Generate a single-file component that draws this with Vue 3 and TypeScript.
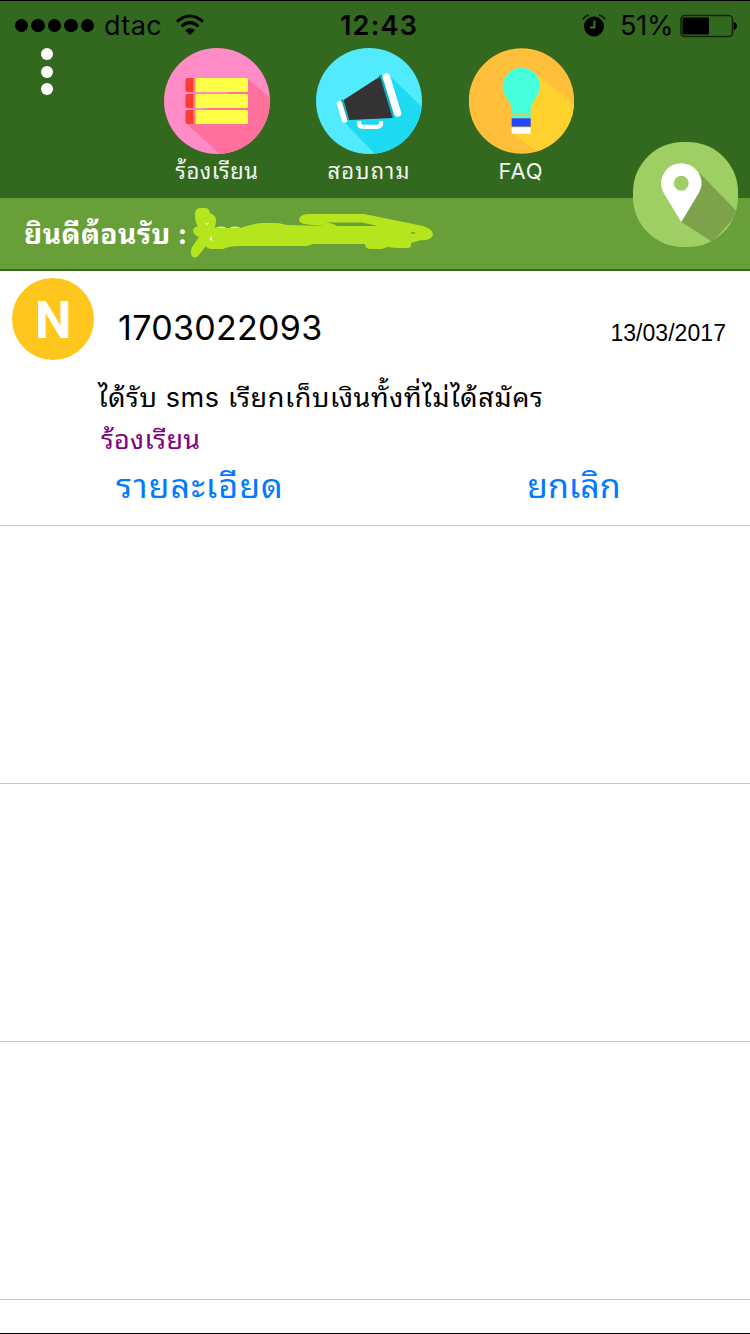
<script setup lang="ts">
interface Row {
  id: string
  date: string
  subject: string
  kind: string
}

const rows: Row[] = [
  {
    id: '1703022093',
    date: '13/03/2017',
    subject: 'ได้รับ sms เรียกเก็บเงินทั้งที่ไม่ได้สมัคร',
    kind: 'ร้องเรียน',
  },
]
const emptyRows = 3
</script>

<template>
  <div class="screen">
    <header class="top">
      <div class="status">
        <div class="status-left">
          <span class="signal"><i v-for="n in 5" :key="n" class="dot"></i></span>
          <span class="carrier">dtac</span>
          <svg class="wifi" width="30" height="22" viewBox="0 0 30 22">
            <g fill="none" stroke="#000" stroke-width="3.1">
              <path d="M2 7.6Q15 -3.6 28 7.6" />
              <path d="M6.6 12.3Q15 4.8 23.4 12.3" />
            </g>
            <path d="M10.2 16.2Q15 12.4 19.8 16.2L15 21Z" />
          </svg>
        </div>
        <span class="clock">12:43</span>
        <div class="status-right">
          <svg class="alarm" width="24" height="24" viewBox="0 0 24 24">
            <circle cx="12" cy="12.500" r="10" />
            <path d="M1 5.500Q2.500 2 7 1.100M23 5.500Q21.500 2 17 1.100" fill="none" stroke="#0f2008" stroke-width="1.800" />
            <path d="M12.500 6.500V13.500H8" fill="none" stroke="#3a7a20" stroke-width="2" />
          </svg>
          <span class="percent">51%</span>
          <svg class="battery" width="58" height="24" viewBox="0 0 58 24">
            <rect x="1" y="1.500" width="51.500" height="21" rx="3.500" fill="none" stroke="#122608" stroke-width="1.600" />
            <rect x="2.500" y="3.500" width="26.500" height="17" rx="1" />
            <path d="M53.500 8Q57 8.500 57 12T53.500 16Z" />
          </svg>
        </div>
      </div>

      <div class="tools">
        <div class="more"><i></i><i></i><i></i></div>
        <nav class="menu">
          <div class="menu-item">
            <svg width="106" height="106" viewBox="0 0 106 106">
              <defs><clipPath id="c1"><circle cx="53" cy="53" r="53" /></clipPath></defs>
              <g clip-path="url(#c1)">
                <rect width="106" height="106" fill="#ff8cc6" />
                <path d="M84 31L112 55V112H62L22 75Z" fill="#ff709d" />
              </g>
              <g v-for="n in 3" :key="n" :transform="`translate(0 ${(n - 1) * 16})`">
                <path d="M23.500 30H29.500V44H23.500Q21.500 44 21.500 42V32Q21.500 30 23.500 30Z" fill="#ff3b30" />
                <path d="M30.300 30V44" stroke="#ff7a7c" stroke-width="1.400" />
                <rect x="31.500" y="30" width="52.500" height="14" rx="1.500" fill="#ffff45" />
              </g>
            </svg>
            <span class="label complain">ร้องเรียน</span>
          </div>
          <div class="menu-item">
            <svg width="106" height="106" viewBox="0 0 106 106">
              <defs><clipPath id="c2"><circle cx="53" cy="53" r="53" /></clipPath></defs>
              <g clip-path="url(#c2)">
                <rect width="106" height="106" fill="#52eaff" />
                <path d="M73 27L112 65V112H65L29 75Z" fill="#1ddaf0" />
              </g>
              <path d="M64 27L77 70" stroke="#18a9bd" stroke-width="3" />
              <path d="M26 52L31 72" stroke="#18a9bd" stroke-width="3" />
              <path d="M27.500 52L64 28.500L76.500 70L33 72Z" fill="#333" />
              <path d="M70.500 29L81.500 65" stroke="#fff" stroke-width="7.500" stroke-linecap="round" />
              <path d="M23.500 55.500L28.500 72" stroke="#fff" stroke-width="5.500" stroke-linecap="round" />
              <path d="M43 73V75Q43 78.800 47 78.800H61Q65 78.800 65 75V73" fill="none" stroke="#fff" stroke-width="4.200" />
            </svg>
            <span class="label ask">สอบถาม</span>
          </div>
          <div class="menu-item">
            <svg width="106" height="106" viewBox="-0.700 0 106 106">
              <defs><clipPath id="c3"><circle cx="52.800" cy="53" r="52.700" /></clipPath></defs>
              <g clip-path="url(#c3)">
                <rect width="106" height="106" fill="#ffbf3a" />
                <path d="M69 27L112 62V112H79L43 84Z" fill="#ffd12f" />
              </g>
              <path d="M43 70V61Q42 55 38 50C35.500 46 34 42 34 37A18.700 18.700 0 0 1 71.300 37C71.300 42 69.800 46 67 50Q63 55 62 61V70Z" fill="#46ffdb" />
              <path d="M43 66.500H62M43 69.700H62" stroke="#c9cf58" stroke-width="1.200" />
              <rect x="43" y="70.300" width="19" height="8.200" fill="#2148ff" />
              <rect x="43" y="78.300" width="19" height="1" fill="#77818c" />
              <rect x="43" y="79.300" width="19" height="6.500" fill="#fff" />
            </svg>
            <span class="label latin">FAQ</span>
          </div>
        </nav>
      </div>
      <svg class="locate" width="106" height="106" viewBox="0.500 0 106 106">
        <defs>
          <clipPath id="c4"><rect x="0.500" y="0" width="105" height="105" rx="50" /></clipPath>
        </defs>
        <g clip-path="url(#c4)">
          <rect width="106" height="106" fill="#9fcf64" />
          <path d="M67 31L106 71L80 100L49 80Z" fill="#7da24b" />
        </g>
        <path fill-rule="evenodd" fill="#fff" d="M48.800 80L31.500 51.500C29.500 47.500 28.500 45 28.500 41.500A20.300 20.300 0 0 1 69.100 41.500C69.100 45 68 47.500 66 51.500ZM41.300 41.200A7.500 7.500 0 1 0 56.300 41.200A7.500 7.500 0 1 0 41.300 41.200Z" />
      </svg>
    </header>

    <section class="welcome">
      <span class="greeting">ยินดีต้อนรับ :</span>
      <svg class="scribble" width="260" height="60" viewBox="190 202 260 60">
        <g fill="#fff" opacity=".75">
          <ellipse cx="221" cy="228.500" rx="5" ry="2" /><ellipse cx="235" cy="228.500" rx="5" ry="2" /><ellipse cx="249" cy="228.500" rx="4" ry="2" />
        </g>
        <path fill="#b5e61d" d="M195 214Q195 208 200 208H205Q209 208 210 213Q217 216 216 221L215 228H240Q254 223 264 223H278L287 225L325 226Q312 225 304 224Q297 222 300 217Q303 214 309 214H364L379 217L423 226Q433 229 433 235Q431 241 421 240L411 243Q412 249 406 248H397L387 247L382 249H371Q365 249 365 244H313L307 246H240Q229 246 223 249H211Q206 248 206 246L198 256Q193 260 191 254Q190 249 194 244L199 237Q193 235 193 230Q194 227 198 226Q195 223 195 214Z" />
        <path fill="#689f38" d="M325 222.500H362L378 226H337Q334 223 325 222.500Z" />
        <path d="M205 223L209 222.500L207.500 225ZM209 239L212 236V241L210 240Z" fill="#eef5d8" />
        <path d="M411 233H415" stroke="#729b30" stroke-width="1.500" />
      </svg>
    </section>

    <main class="list">
      <article v-for="row in rows" :key="row.id" class="cell">
        <div class="cell-head">
          <span class="avatar">N</span>
          <span class="number">{{ row.id }}</span>
          <span class="date">{{ row.date }}</span>
        </div>
        <div class="subject"><span>{{ row.subject }}</span></div>
        <div class="kind"><span>{{ row.kind }}</span></div>
        <div class="actions">
          <span class="detail">รายละเอียด</span>
          <span class="cancel">ยกเลิก</span>
        </div>
      </article>
      <div v-for="n in emptyRows" :key="n" class="cell empty"></div>
    </main>
  </div>
</template>

<style>
body {
  margin: 0;
  background: #fff;
}
</style>

<style scoped>
.screen {
  box-sizing: border-box;
  display: flex;
  flex-direction: column;
  width: 750px;
  height: 1334px;
  overflow: hidden;
  border-top: 1px solid #000;
  border-bottom: 1px solid #000;
  background: #fff;
  color: #000;
  font-family: Inter, "Noto Sans Thai Looped", Loma, Garuda, Umpush, Waree, "Noto Serif Thai", "Noto Sans", sans-serif;
  white-space: nowrap;
}
.top {
  position: relative;
  flex: none;
  height: 197px;
  background: #33691e;
}
.status {
  box-sizing: border-box;
  display: grid;
  grid-template-columns: 340px 80px 1fr;
  height: 47px;
  padding-top: 2px;
  align-items: center;
}
.status-left {
  display: flex;
  align-items: center;
  padding-left: 15px;
}
.signal {
  display: flex;
  gap: 3.300px;
  width: 89px;
}
.dot {
  width: 13.200px;
  height: 13.200px;
  border-radius: 50%;
  background: #000;
}
.carrier {
  width: 71px;
  font-size: 27px;
  letter-spacing: 0.400px;
  line-height: 34px;
}
.wifi {
  margin-top: -2px;
}
.clock {
  font-size: 27px;
  font-weight: 600;
  letter-spacing: 1.200px;
}
.status-right {
  display: flex;
  align-items: center;
  padding-left: 162px;
}
.percent {
  width: 60px;
  margin-left: 14px;
  font-size: 27px;
  letter-spacing: -0.200px;
}
.battery {
  flex: none;
}
.tools {
  display: flex;
}
.more {
  display: flex;
  flex-direction: column;
  gap: 5.400px;
  width: 123px;
  padding-left: 41px;
}
.more i {
  width: 12.200px;
  height: 12.200px;
  border-radius: 50%;
  background: #fff;
}
.menu {
  display: flex;
  gap: 46px;
}
.menu-item {
  display: flex;
  flex-direction: column;
  align-items: center;
  width: 106px;
}
.label {
  height: 32px;
  margin-top: 1px;
  color: #f1f5ef;
  font-size: 22px;
  line-height: 32px;
}
.complain {
  letter-spacing: 0.500px;
}
.ask {
  letter-spacing: 1.200px;
}
.latin {
  letter-spacing: 0.900px;
}
.locate {
  position: absolute;
  z-index: 2;
  top: 141px;
  left: 633px;
}
.welcome {
  box-sizing: border-box;
  display: flex;
  flex: none;
  height: 73px;
  padding-left: 24px;
  border-bottom: 2px solid #33691e;
  background: #689f38;
}
.greeting {
  width: 166px;
  color: #fff;
  font-size: 28px;
  font-weight: 700;
  letter-spacing: 0.500px;
  line-height: 72px;
}
.scribble {
  margin-top: 4px;
}
.cell {
  box-sizing: border-box;
  height: 258px;
  border-bottom: 1px solid #c8c7cc;
}
.cell:first-child {
  height: 255px;
}
.cell-head {
  display: flex;
  padding: 7px 24px 0 12px;
}
.avatar {
  width: 82px;
  height: 82px;
  border-radius: 50%;
  background: #ffc61e;
  color: #fff;
  font-family: Roboto, sans-serif;
  font-size: 52px;
  font-weight: 700;
  line-height: 85px;
  text-align: center;
}
.number {
  margin-left: 24px;
  font-size: 34px;
  letter-spacing: 0.300px;
  line-height: 100px;
  height: 82px;
}
.date {
  margin-left: auto;
  font-family: "Liberation Sans", sans-serif;
  font-size: 23px;
  letter-spacing: 0.050px;
  line-height: 110px;
  height: 82px;
}
.subject {
  height: 58px;
  padding-left: 98px;
  font-size: 27px;
  letter-spacing: 0.620px;
  line-height: 75px;
}
.kind {
  height: 42px;
  padding-left: 101px;
  color: #800080;
  font-size: 27px;
  letter-spacing: 0.300px;
  line-height: 43px;
}
.actions {
  display: flex;
  height: 50px;
  padding-left: 116px;
  color: #007aff;
  font-size: 34px;
  line-height: 51px;
}
.detail {
  width: 411px;
  letter-spacing: 1.100px;
}
</style>
